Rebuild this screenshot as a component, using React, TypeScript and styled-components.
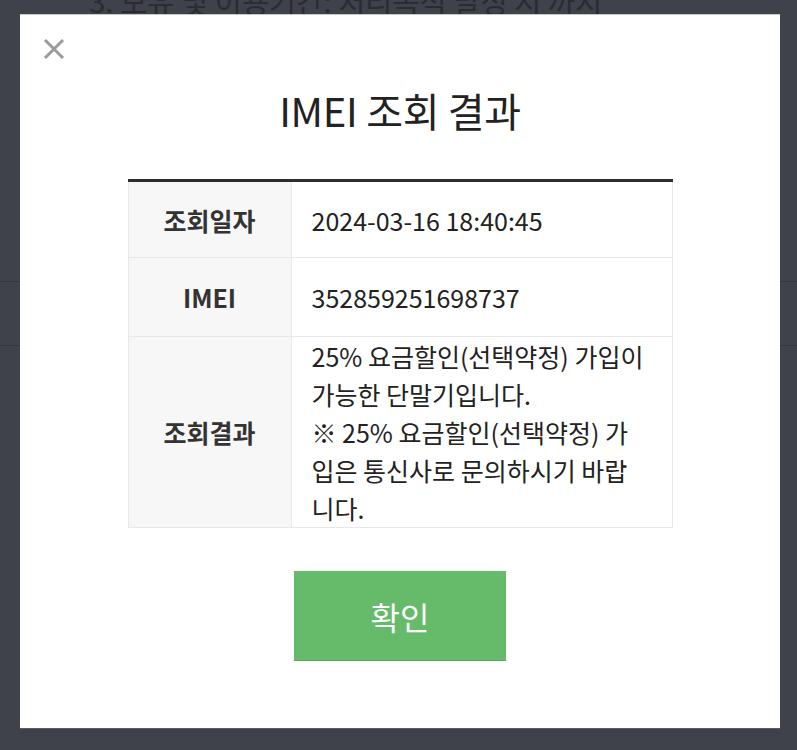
import React from 'react'
import styled, { createGlobalStyle } from 'styled-components'

const GlobalStyle = createGlobalStyle`
  html, body {
    margin: 0;
    padding: 0;
    background: #3f424b;
    font-family: "Noto Sans CJK KR", "Noto Sans", sans-serif;
  }
`

const Page = styled.div`
  position: relative;
  width: 797px;
  height: 750px;
  overflow: hidden;
  background: #3f424b;
`

const BgText = styled.div`
  margin: -20px 0 0 89px;
  font-size: 29.5px;
  line-height: 40px;
  color: #2a2c32;
  white-space: nowrap;
`

const BgRows = styled.div`
  margin-top: 261px;
  height: 63px;
  border-top: 1px solid #34363e;
  border-bottom: 1px solid #34363e;
`

const Modal = styled.div`
  position: absolute;
  top: 14px;
  left: 20px;
  width: 760px;
  height: 715px;
  box-sizing: border-box;
  background: #fff;
  border-top: 1px solid #c9c9c9;
  border-bottom: 1px solid #5a5d66;
  display: flex;
  flex-direction: column;
  align-items: center;
  padding-top: 70px;
`

const CloseButton = styled.button`
  position: absolute;
  top: 22px;
  left: 22px;
  width: 24px;
  height: 24px;
  padding: 0;
  border: 0;
  background: none;
  cursor: pointer;
  display: flex;
  align-items: center;
  justify-content: center;
`

const Title = styled.h2`
  margin: 0;
  font-size: 40px;
  font-weight: 400;
  line-height: 50px;
  color: #222;
  letter-spacing: -0.3px;
`

const ResultTable = styled.table`
  margin-top: 44px;
  width: 545px;
  border-collapse: collapse;
  border-top: 3px solid #2d2d2d;
  table-layout: fixed;
`

const Row = styled.tr<{ $h?: number }>`
  height: ${p => (p.$h ? `${p.$h}px` : 'auto')};
`

const Label = styled.th`
  width: 163px;
  box-sizing: border-box;
  background: #f7f7f7;
  border: 1px solid #e8e8e8;
  font-size: 25px;
  font-weight: 700;
  color: #333;
  text-align: center;
  vertical-align: middle;
  padding: 0;
`

const Value = styled.td`
  border: 1px solid #e8e8e8;
  padding: 0 20px;
  font-size: 25px;
  line-height: 38px;
  color: #222;
  text-align: left;
  vertical-align: middle;
  white-space: nowrap;
`

const ConfirmButton = styled.button`
  margin-top: 43px;
  width: 212px;
  height: 90px;
  border: 0;
  border-bottom: 1px solid #5aa85e;
  background: #66bb6a;
  color: #fff;
  font-family: inherit;
  font-size: 32px;
  font-weight: 400;
  cursor: pointer;
`

const resultLines = [
  '25% 요금할인(선택약정) 가입이',
  '가능한 단말기입니다.',
  '※ 25% 요금할인(선택약정) 가',
  '입은 통신사로 문의하시기 바랍',
  '니다.',
]

const App = () => {
  return (
    <Page>
      <GlobalStyle />
      <BgText>3. 보유 및 이용기간: 처리목적 달성 시 까지</BgText>
      <BgRows />
      <Modal>
        <CloseButton aria-label="닫기">
          <svg width="22" height="22" viewBox="0 0 22 22">
            <path d="M2 2 L20 20 M20 2 L2 20" stroke="#9a9a9a" strokeWidth="3" />
          </svg>
        </CloseButton>
        <Title>IMEI 조회 결과</Title>
        <ResultTable>
          <tbody>
            <Row $h={77}>
              <Label>조회일자</Label>
              <Value>2024-03-16 18:40:45</Value>
            </Row>
            <Row $h={79}>
              <Label>IMEI</Label>
              <Value>352859251698737</Value>
            </Row>
            <Row>
              <Label>조회결과</Label>
              <Value>
                {resultLines.map((line, i) => (
                  <React.Fragment key={i}>
                    {i > 0 && <br />}
                    {line}
                  </React.Fragment>
                ))}
              </Value>
            </Row>
          </tbody>
        </ResultTable>
        <ConfirmButton>확인</ConfirmButton>
      </Modal>
    </Page>
  )
}

export default App
